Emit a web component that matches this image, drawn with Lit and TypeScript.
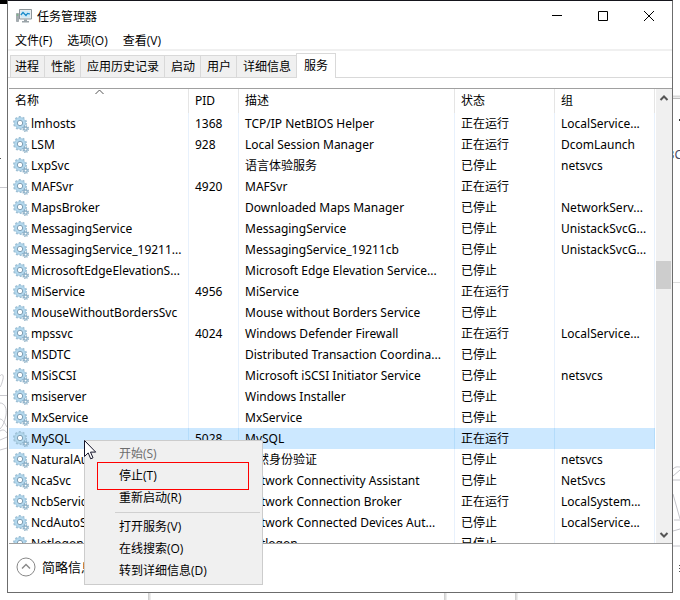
import { LitElement, html, css, svg } from "lit";
import { customElement, property } from "lit/decorators.js";
import { classMap } from "lit/directives/class-map.js";

interface Service {
  name: string;
  pid?: string;
  desc: string;
  running?: boolean;
  group?: string;
}

const SERVICES: Service[] = [
  { name: "lmhosts", pid: "1368", desc: "TCP/IP NetBIOS Helper", running: true, group: "LocalService..." },
  { name: "LSM", pid: "928", desc: "Local Session Manager", running: true, group: "DcomLaunch" },
  { name: "LxpSvc", desc: "语言体验服务", group: "netsvcs" },
  { name: "MAFSvr", pid: "4920", desc: "MAFSvr", running: true },
  { name: "MapsBroker", desc: "Downloaded Maps Manager", group: "NetworkServ..." },
  { name: "MessagingService", desc: "MessagingService", group: "UnistackSvcG..." },
  { name: "MessagingService_19211...", desc: "MessagingService_19211cb", group: "UnistackSvcG..." },
  { name: "MicrosoftEdgeElevationS...", desc: "Microsoft Edge Elevation Service..." },
  { name: "MiService", pid: "4956", desc: "MiService", running: true },
  { name: "MouseWithoutBordersSvc", desc: "Mouse without Borders Service" },
  { name: "mpssvc", pid: "4024", desc: "Windows Defender Firewall", running: true, group: "LocalService..." },
  { name: "MSDTC", desc: "Distributed Transaction Coordina..." },
  { name: "MSiSCSI", desc: "Microsoft iSCSI Initiator Service", group: "netsvcs" },
  { name: "msiserver", desc: "Windows Installer" },
  { name: "MxService", desc: "MxService" },
  { name: "MySQL", pid: "5028", desc: "MySQL", running: true },
  { name: "NaturalAuthentication", desc: "自然身份验证", group: "netsvcs" },
  { name: "NcaSvc", desc: "Network Connectivity Assistant", group: "NetSvcs" },
  { name: "NcbService", desc: "Network Connection Broker", running: true, group: "LocalSystem..." },
  { name: "NcdAutoSetup", desc: "Network Connected Devices Aut...", group: "LocalService..." },
  { name: "Netlogon", desc: "Netlogon" },
];

const TABS = ["进程", "性能", "应用历史记录", "启动", "用户", "详细信息", "服务"];

const gearIcon = () => svg`
  <svg class="gear" viewBox="0 0 16 16" width="16" height="16" aria-hidden="true">
    <circle cx="7" cy="7" r="6" fill="none" stroke="#9dbfd4" stroke-width="2" stroke-dasharray="1.9 1.87"/>
    <circle cx="7" cy="7" r="4.2" fill="none" stroke="#b3d8ee" stroke-width="3"/>
    <circle cx="7" cy="7" r="5.5" fill="none" stroke="#9bbfd5" stroke-width=".6"/>
    <circle cx="7" cy="7" r="2.7" fill="#fff" stroke="#6f93ac" stroke-width=".9"/>
    <circle cx="12.6" cy="12.6" r="2.6" fill="none" stroke="#86a9c0" stroke-width="1.6" stroke-dasharray="1.1 .94"/>
    <circle cx="12.6" cy="12.6" r="1.6" fill="#fff" stroke="#8fb3ca" stroke-width="1.3"/>
  </svg>`;

@customElement("tm-tabs")
class TmTabs extends LitElement {
  static styles = css`
    :host { display: block; border-bottom: 1px solid #d9d9d9; }
    .tabs { display: flex; align-items: flex-end; padding: 0 2px; height: 24px; }
    .tab {
      font: inherit; color: #000; background: #f0f0f0; height: 22px; line-height: 20px; margin: 0;
      padding: 0 5px 0 6px; border: 1px solid #d9d9d9; border-width: 1px 1px 0 0; white-space: nowrap;
    }
    .tab:first-child { border-left-width: 1px; padding: 0 5px 0 4px; }
    .tab.active {
      background: #fff; height: 25px; padding: 0 7px; margin-bottom: -1px; line-height: 22px;
      margin-left: -1px; border-left-width: 1px;
    }
  `;
  @property() active = "服务";
  render() {
    return html`<div class="tabs" role="tablist">
      ${TABS.map(
        (t) => html`<button role="tab" class=${classMap({ tab: true, active: t === this.active })}>${t}</button>`
      )}
    </div>`;
  }
}

@customElement("tm-services")
class TmServices extends LitElement {
  static styles = css`
    :host {
      display: flex; min-height: 0; overflow: hidden; background: #fff;
      border: 1px solid #a0a0a0; border-width: 1px 0;
    }
    .view { flex: 1; min-width: 0; overflow: hidden; }
    table { width: 100%; table-layout: fixed; border-collapse: separate; border-spacing: 0; }
    th, td {
      box-sizing: border-box; padding: 0 0 0 6px; text-align: left; font-weight: 400;
      white-space: nowrap; overflow: hidden; border-right: 1px solid #e8f1fc;
    }
    th { height: 24px; padding-bottom: 2px; border-right-color: #e5e5e5; position: relative; }
    td { height: 21px; line-height: 21px; }
    .name { width: 180px; }
    .pid { width: 50px; }
    .col { width: 100px; }
    .svc { display: flex; align-items: center; gap: 2px; padding-left: 4px; height: 21px; }
    td:first-child { padding-left: 0; }
    .gear { flex: none; }
    .selected td { background: #cce8ff; border-right-color: #b4dcfb; }
    .sort { position: absolute; left: 86px; top: 0; }
    .bar { display: flex; flex-direction: column; width: 16px; margin-left: 1px; background: #f0f0f0; }
    .arrow { border: 0; padding: 0; background: none; height: 17px; display: grid; place-items: center; }
    .track { flex: 1; display: flex; flex-direction: column; }
    .before { flex: 155; }
    .thumb { flex: 28; background: #cdcdcd; margin-right: 1px; }
    .after { flex: 237; }
  `;
  @property() selected = "MySQL";
  render() {
    return html`
      <div class="view">
        <table>
          <thead>
            <tr>
              <th class="name">名称<svg class="sort" width="9" height="6" viewBox="0 0 9 6"><path d="M.5 5 4.5 1 8.5 5" fill="none" stroke="#555"/></svg></th>
              <th class="pid">PID</th><th>描述</th><th class="col">状态</th><th class="col">组</th>
            </tr>
          </thead>
          <tbody>
            ${SERVICES.map(
              (s) => html`<tr class=${classMap({ selected: s.name === this.selected })}>
                <td><div class="svc">${gearIcon()}<span>${s.name}</span></div></td>
                <td>${s.pid ?? ""}</td>
                <td>${s.desc}</td>
                <td>${s.running ? "正在运行" : "已停止"}</td>
                <td>${s.group ?? ""}</td>
              </tr>`
            )}
          </tbody>
        </table>
      </div>
      <div class="bar">
        <button class="arrow" aria-label="向上滚动"><svg width="10" height="8" viewBox="0 0 10 8"><path d="M1.5 6 5 2.5 8.5 6" fill="none" stroke="#555" stroke-width="2"/></svg></button>
        <div class="track"><div class="before"></div><div class="thumb"></div><div class="after"></div></div>
        <button class="arrow" aria-label="向下滚动"><svg width="10" height="8" viewBox="0 0 10 8"><path d="M1.5 2 5 5.5 8.5 2" fill="none" stroke="#555" stroke-width="2"/></svg></button>
      </div>`;
  }
}

@customElement("tm-context-menu")
class TmContextMenu extends LitElement {
  static styles = css`
    :host {
      display: block; box-sizing: border-box; width: 179px; padding: 2px; background: #f0f0f0;
      border: 1px solid #ccc;
    }
    .item {
      display: block; width: 100%; height: 22px; border: 0; margin: 0; padding: 0 0 0 32px;
      background: none; text-align: left; font: inherit; color: #000; line-height: 22px;
    }
    .item:disabled { color: #6d6d6d; }
    .sep { height: 1px; margin: 3px 0 3px 28px; background: #d0d0d0; }
    .mark {
      position: absolute; left: 12px; top: 21px; width: 152px; height: 28px; box-sizing: border-box;
      border: 1px solid #f00; pointer-events: none;
    }
    .cursor { position: absolute; left: -1px; top: -1px; }
  `;
  render() {
    return html`
      <div role="menu">
        <button role="menuitem" class="item" disabled>开始(S)</button>
        <button role="menuitem" class="item">停止(T)</button>
        <button role="menuitem" class="item">重新启动(R)</button>
        <div class="sep" role="separator"></div>
        <button role="menuitem" class="item">打开服务(V)</button>
        <button role="menuitem" class="item">在线搜索(O)</button>
        <button role="menuitem" class="item">转到详细信息(D)</button>
      </div>
      <div class="mark"></div>
      <svg class="cursor" width="13" height="20" viewBox="0 0 13 20"><path d="M.5.5v16l3.7-3.6 2.5 5.9 2.3-1-2.5-5.7h5.2z" fill="#fff" stroke="#14142a"/></svg>`;
  }
}

@customElement("app-root")
class AppRoot extends LitElement {
  static styles = css`
    :host {
      display: block; position: relative; height: 100vh; overflow: hidden; background: #fff; color: #000;
      font: 12px "Noto Sans", "Noto Sans CJK SC", sans-serif;
    }
    .edge { position: absolute; top: 0; }
    .left { left: 0; }
    .right { right: 0; }
    .behind { position: absolute; right: -2px; top: 147px; color: #4a4a60; line-height: 16px; }
    .below { position: absolute; bottom: 0; left: 148px; right: 162px; height: 7px; display: flex; }
    .shade { width: 3px; background: linear-gradient(90deg, #c8c8c8, #f4f4f4); }
    .sheet { flex: 1; }
    .gap { width: 68px; }
    .window {
      position: relative; box-sizing: border-box; height: calc(100vh - 7px); margin: 0 7px;
      display: flex; flex-direction: column; background: #fff; border: 1px solid #6c6c6c;
      border-top-color: #15151c;
    }
    .title { display: flex; align-items: center; height: 30px; padding-left: 8px; }
    .title h1 { flex: 1; margin: 0 0 0 5px; font-size: 12px; font-weight: 400; }
    .caption { width: 46px; height: 28px; padding: 0; border: 0; background: none; display: grid; place-items: center; }
    .menubar { display: flex; gap: 15px; height: 18px; padding: 0 7px; border-bottom: 2px solid #f0f0f0; }
    .menubar button { border: 0; padding: 0; background: none; font: inherit; color: #000; line-height: 20px; height: 20px; }
    .menu-text { font-family: "Open Sans", "Noto Sans CJK SC", sans-serif; }
    tm-tabs { margin-top: 2px; }
    tm-services { flex: 1; margin: 10px 0 0 1px; }
    .footer { box-sizing: border-box; height: 48px; padding: 0 0 2px 8px; display: flex; align-items: center; }
    .fewer { display: flex; align-items: center; gap: 6px; height: 20px; border: 0; padding: 0; background: none; font: inherit; font-size: 13px; line-height: 20px; color: #000; }
    tm-context-menu { position: absolute; left: 84px; top: 440px; }
  `;
  render() {
    return html`
      <svg class="edge left" width="7" height="600" viewBox="0 0 7 600" fill="none" stroke="#c9c9ce" aria-hidden="true">
        <path d="M0 0h7v4h-7z" fill="#000" stroke="none"/>
        <path d="M0 158.500h1" stroke="#555"/>
        <path d="M0 187.500h7M0 395.500h7" />
        <path d="M0 376c2-3 4-1 3 3s-2 7-3 8M0 403c5 0 7 6 6 12s-3 11-6 14M0 419c3 0 5 5 7 8M0 431c3-2 5-1 7 2M0 440l7-3M0 450l7-2" />
      </svg>
      <svg class="edge right" width="7" height="600" viewBox="0 0 7 600" fill="none" stroke="#c4c4ca" aria-hidden="true">
        <path d="M0 96.500h7" stroke="#d8d8d8" stroke-width="2"/>
        <path d="M0 98.500h7" stroke="#bbb"/>
        <path d="M6.500 119v2" stroke="#333"/>
        <path d="M0 282.500h7" stroke="#ddd"/>
        <path d="M0 469c3-3 5-2 7-2M0 480h7M0 476l7-6M0 494l7 25M1 520h6M0 531l7-2M0 546h7"/>
        <path d="M6.500 565v1m0 2v1m0 2v1" stroke="#555"/>
      </svg>
      <div class="behind">3C</div>
      <div class="below">
        <div class="shade"></div><div class="sheet"></div><div class="shade"></div><div class="gap"></div><div class="shade"></div>
      </div>
      <main class="window">
        <div class="title">
          <svg width="16" height="14" viewBox="0 0 16 14" aria-hidden="true">
            <path d="M.5 4.500h2v8h-2z" fill="#a3abb0" stroke="#858e94" stroke-width=".6"/>
            <path d="M.8 6h1.400" stroke="#5fc26a"/>
            <path d="M3.500.5h12v9.500h-12z" fill="#e8ecee" stroke="#8d969b"/>
            <path d="M5 2h9v6.500h-9z" fill="#cfeaf8"/>
            <path d="M4.800 6 7 3.500 10 6.500 11.500 4.500 14 5" fill="none" stroke="#1889c9" stroke-width="1.200"/>
            <path d="M8 10.500h3v1.500h2v1.500h-7v-1.500h2z" fill="#9aa3a8"/>
          </svg>
          <h1>任务管理器</h1>
          <button class="caption" aria-label="最小化"><svg width="10" height="10"><path d="M0 4.500h10" stroke="#000"/></svg></button>
          <button class="caption" aria-label="最大化"><svg width="10" height="10"><path d="M.5.5h9v9h-9z" fill="none" stroke="#000"/></svg></button>
          <button class="caption" aria-label="关闭"><svg width="10" height="10"><path d="M0 0l10 10M10 0 0 10" stroke="#000"/></svg></button>
        </div>
        <nav class="menubar menu-text">
          <button>文件(F)</button><button>选项(O)</button><button>查看(V)</button>
        </nav>
        <tm-tabs></tm-tabs>
        <tm-services></tm-services>
        <div class="footer">
          <button class="fewer">
            <svg width="20" height="20" viewBox="0 0 20 20" fill="none" stroke="#888" aria-hidden="true"><circle cx="10" cy="10" r="9"/><path d="M6 11.500 10 7.500 14 11.500" stroke-width="1.400"/></svg>
            <span>简略信息(D)</span>
          </button>
        </div>
      </main>
      <tm-context-menu class="menu-text"></tm-context-menu>`;
  }
}
